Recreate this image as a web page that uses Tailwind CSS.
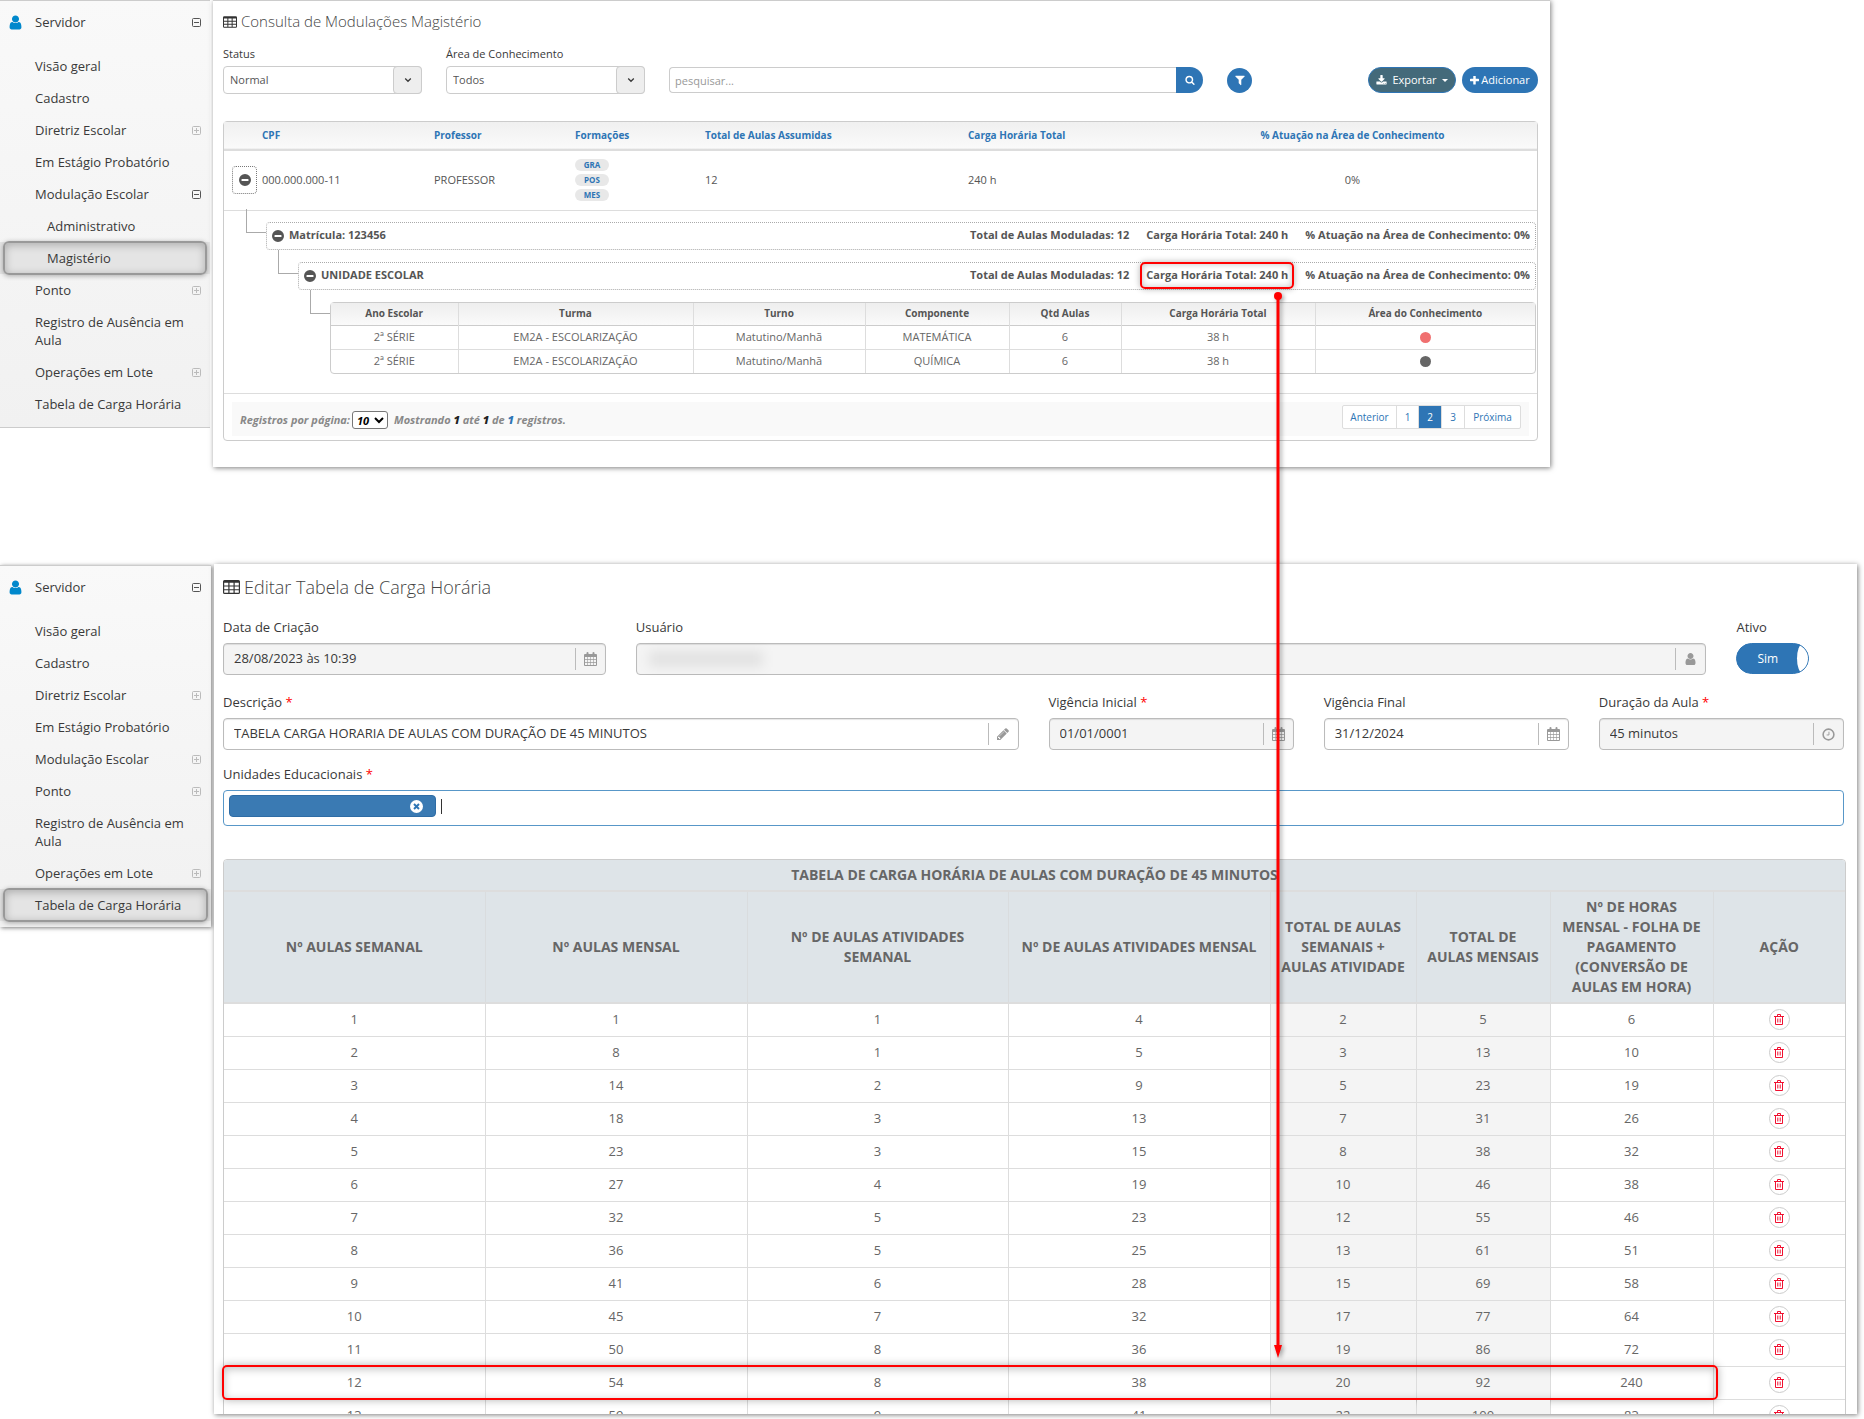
<!DOCTYPE html>
<html lang="pt-BR">
<head>
  <meta charset="UTF-8" />
  <meta name="viewport" content="width=device-width, initial-scale=1.0" />
  <title>Tabela de Carga Horária</title>
  <script src="https://cdn.jsdelivr.net/npm/@tailwindcss/browser@4"></script>
</head>
<body class="bg-white font-['Open_Sans',sans-serif] text-[13px] text-[#393939] overflow-x-hidden">

  <!-- icons -->
  <svg class="hidden">
    <symbol id="i-user" viewBox="192 128 1408 1536"><path d="M1536 1399q0 109-62.5 187t-150.5 78h-854q-88 0-150.5-78t-62.5-187q0-85 8.5-160.5t31.5-152 58.5-131 94-89 134.5-34.5q131 128 313 128t313-128q76 0 134.5 34.5t94 89 58.5 131 31.5 152 8.5 160.5zm-256-887q0 159-112.5 271.5t-271.5 112.5-271.5-112.5-112.5-271.5 112.5-271.5 271.5-112.5 271.5 112.5 112.5 271.5z"/></symbol>
    <symbol id="i-table" viewBox="0 0 17 14"><path fill-rule="evenodd" d="M1.5 0h14A1.5 1.5 0 0 1 17 1.500v11a1.500 1.500 0 0 1-1.500 1.500h-14A1.500 1.500 0 0 1 0 12.500v-11A1.500 1.500 0 0 1 1.500 0zM1.200 2.800v2.700h4.100V2.800zM6.500 2.800v2.700h4V2.800zM11.700 2.800v2.700h4.100V2.800zM1.200 6.600v2.600h4.100V6.600zM6.500 6.600v2.600h4V6.600zM11.700 6.600v2.600h4.100V6.600zM1.200 10.300v2.500h4.100v-2.500zM6.500 10.300v2.500h4v-2.500zM11.700 10.300v2.500h4.100v-2.500z"/></symbol>
    <symbol id="i-calendar" viewBox="0 0 13 14"><path fill-rule="evenodd" d="M1 2h1.500V1a1 1 0 0 1 2 0v1h4V1a1 1 0 0 1 2 0v1H12a1 1 0 0 1 1 1v10a1 1 0 0 1-1 1H1a1 1 0 0 1-1-1V3a1 1 0 0 1 1-1zM1 5v2.200h2.200V5zM3.800 5v2.200h2.400V5zM6.800 5v2.200h2.400V5zM9.800 5v2.200H12V5zM1 7.900v2.200h2.200V7.900zM3.800 7.900v2.200h2.400V7.900zM6.800 7.900v2.200h2.400V7.900zM9.800 7.900v2.200H12V7.900zM1 10.800V13h2.200v-2.200zM3.800 10.800V13h2.400v-2.200zM6.800 10.800V13h2.400v-2.200zM9.800 10.800V13H12v-2.200z"/></symbol>
    <symbol id="i-pencil" viewBox="0 0 1792 1792"><path d="M491 1536l91-91-235-235-91 91v107h128v128h107zm523-928q0-22-22-22-10 0-17 7l-542 542q-7 7-7 17 0 22 22 22 10 0 17-7l542-542q7-7 7-17zm-54-192l416 416-832 832h-416v-416zm683 96q0 53-37 90l-166 166-416-416 166-165q36-38 90-38 53 0 91 38l235 234q37 39 37 91z"/></symbol>
    <symbol id="i-clock" viewBox="0 0 14 14"><path fill="none" stroke="currentColor" stroke-width="1.700" d="M7 1.200a5.800 5.800 0 1 1 0 11.600A5.800 5.800 0 0 1 7 1.200z"/><path fill="none" stroke="currentColor" d="M7.500 4v3.500H5"/></symbol>
    <symbol id="i-search" viewBox="0 0 1792 1792"><path d="M1216 832q0-185-131.500-316.500t-316.500-131.500-316.500 131.500-131.500 316.500 131.500 316.500 316.500 131.500 316.500-131.500 131.500-316.500zm512 832q0 52-38 90t-90 38q-54 0-90-38l-343-342q-179 124-399 124-143 0-273.500-55.500t-225-150-150-225-55.500-273.500 55.500-273.500 150-225 225-150 273.500-55.500 273.500 55.500 225 150 150 225 55.500 273.500q0 220-124 399l343 343q37 37 37 90z"/></symbol>
    <symbol id="i-filter" viewBox="0 0 1792 1792"><path d="M1595 295q17 41-14 70l-493 493v742q0 42-39 59-13 5-25 5-27 0-45-19l-256-256q-19-19-19-45v-486l-493-493q-31-29-14-70 17-39 59-39h1280q42 0 59 39z"/></symbol>
    <symbol id="i-plus" viewBox="192 192 1408 1408"><path d="M1600 736v192q0 40-28 68t-68 28h-416v416q0 40-28 68t-68 28h-192q-40 0-68-28t-28-68v-416h-416q-40 0-68-28t-28-68v-192q0-40 28-68t68-28h416v-416q0-40 28-68t68-28h192q40 0 68 28t28 68v416h416q40 0 68 28t28 68z"/></symbol>
    <symbol id="i-download" viewBox="0 0 1792 1600"><path d="M1344 1344q0-26-19-45t-45-19-45 19-19 45 19 45 45 19 45-19 19-45zm256 0q0-26-19-45t-45-19-45 19-19 45 19 45 45 19 45-19 19-45zm128-224v320q0 40-28 68t-68 28h-1472q-40 0-68-28t-28-68v-320q0-40 28-68t68-28h465l135 136q58 56 136 56t136-56l136-136h464q40 0 68 28t28 68zm-325-569q17 41-14 70l-448 448q-18 19-45 19t-45-19l-448-448q-31-29-14-70 17-39 59-39h256v-448q0-26 19-45t45-19h256q26 0 45 19t19 45v448h256q42 0 59 39z"/></symbol>
    <symbol id="i-minus" viewBox="0 0 12 12"><path fill-rule="evenodd" d="M6 0a6 6 0 1 1 0 12A6 6 0 0 1 6 0zM3 5a.5.5 0 0 0-.5.5v1A.5.5 0 0 0 3 7h6a.5.5 0 0 0 .5-.5v-1A.5.5 0 0 0 9 5z"/></symbol>
    <symbol id="i-times" viewBox="0 0 12 12"><circle cx="6" cy="6" r="6" fill="#fff"/><path stroke="#2e75b5" stroke-width="1.800" d="M3.700 3.700l4.600 4.600M8.300 3.700L3.700 8.300"/></symbol>
    <symbol id="i-trash" viewBox="0 0 10 11"><path fill="none" stroke="currentColor" d="M0 2.500h10M3.500 2V.5h3V2M1.500 2.500v8h7v-8M3.800 4.500v4M6.200 4.500v4"/></symbol>
    <symbol id="i-down" viewBox="0 0 8 8"><path fill="none" stroke="currentColor" stroke-width="1.300" d="M1.200 2.500L4 5.300l2.800-2.800"/></symbol>
    <symbol id="i-open" viewBox="0 0 9 9"><path fill="none" stroke="currentColor" d="M1.500.5h6a1 1 0 0 1 1 1v6a1 1 0 0 1-1 1h-6a1 1 0 0 1-1-1v-6a1 1 0 0 1 1-1zM2 4.500h5"/></symbol>
    <symbol id="i-closed" viewBox="0 0 9 9"><path fill="none" stroke="currentColor" d="M1.500.5h6a1 1 0 0 1 1 1v6a1 1 0 0 1-1 1h-6a1 1 0 0 1-1-1v-6a1 1 0 0 1 1-1zM2 4.500h5M4.500 2v5"/></symbol>
  </svg>

  <!-- Consulta -->
  <div class="flex items-start pr-[314px]">
    <nav id="menuConsulta" class="w-[210px] shrink-0 h-[428px] pt-[6px] bg-linear-to-b from-[#f9f9f9] to-[#f1f1f1] border-t border-b border-[#ccc]"></nav>

    <main class="flex-1 min-w-0 h-[467px] ml-[3px] pl-[10px] pr-[12px] bg-white border-t border-[#ccc] shadow-[1px_1px_5px_rgba(0,0,0,0.5)] text-[11px]">
      <h1 class="flex items-center gap-1 pt-[8px] h-[33px] text-[15px] font-light text-[#444]">
        <svg class="w-[14px] h-[12px] fill-[#333]"><use href="#i-table" /></svg>Consulta de Modulações Magistério
      </h1>

      <div class="flex items-end pt-3">
        <div class="w-[199px]">
          <label for="status" class="block leading-4 mb-1">Status</label>
          <div class="relative">
            <select id="status" class="appearance-none w-full h-7 pl-[6px] border border-[#ccc] rounded-[4px] bg-white text-[11px] text-[#555]"><option>Normal</option></select>
            <span class="absolute right-0 top-0 w-[29px] h-7 border border-[#ccc] rounded-[4px] bg-[#eee] grid place-items-center pointer-events-none"><svg class="w-2 h-2"><use href="#i-down" /></svg></span>
          </div>
        </div>
        <div class="w-[199px] ml-6">
          <label for="area" class="block leading-4 mb-1">Área de Conhecimento</label>
          <div class="relative">
            <select id="area" class="appearance-none w-full h-7 pl-[6px] border border-[#ccc] rounded-[4px] bg-white text-[11px] text-[#555]"><option>Todos</option></select>
            <span class="absolute right-0 top-0 w-[29px] h-7 border border-[#ccc] rounded-[4px] bg-[#eee] grid place-items-center pointer-events-none"><svg class="w-2 h-2"><use href="#i-down" /></svg></span>
          </div>
        </div>
        <div class="flex flex-1 items-center ml-6 mb-px">
          <input type="text" aria-label="pesquisar" placeholder="pesquisar..." class="flex-1 min-w-0 h-[26px] px-[5px] border border-[#ccc] border-r-0 rounded-l-[4px] placeholder:text-[#999]" />
          <button aria-label="Pesquisar" class="w-[27px] h-[26px] rounded-r-full bg-[#2e75b5] grid place-items-center"><svg class="w-[10px] h-[10px] fill-white"><use href="#i-search" /></svg></button>
          <button aria-label="Filtrar" class="w-[25px] h-[25px] ml-6 rounded-full bg-[#2e75b5] grid place-items-center"><svg class="w-[12px] h-[12px] fill-white"><use href="#i-filter" /></svg></button>
          <button class="flex items-center justify-center gap-[5px] w-[88px] h-[26px] ml-[116px] rounded-full bg-[#446a7a] border border-[#2e75b5] text-white"><svg class="w-[11px] h-[10px] fill-white"><use href="#i-download" /></svg>Exportar<span class="border-x-[3px] border-x-transparent border-t-[3px] border-t-white"></span></button>
          <button class="flex items-center justify-center gap-[2px] w-[76px] h-[26px] ml-[6px] rounded-full bg-[#2e75b5] text-white"><svg class="w-[9px] h-[9px] fill-white"><use href="#i-plus" /></svg>Adicionar</button>
        </div>
      </div>

      <section class="mt-[27px] h-[320px] border border-[#ccc] rounded-[4px]">
        <table class="w-full table-fixed text-left">
          <colgroup><col class="w-[38px]" /><col class="w-[172px]" /><col class="w-[141px]" /><col class="w-[130px]" /><col class="w-[263px]" /><col class="w-[200px]" /><col /></colgroup>
          <thead>
            <tr class="h-[28px] bg-linear-to-b from-[#f0f0f0] to-[#fafafa] border-b-2 border-[#ddd] text-[10px] text-[#2e75b5]">
              <th></th><th>CPF</th><th>Professor</th><th>Formações</th><th>Total de Aulas Assumidas</th><th>Carga Horária Total</th><th class="text-center">% Atuação na Área de Conhecimento</th>
            </tr>
          </thead>
          <tbody>
            <tr class="h-[60px] border-b border-[#ddd] text-[#555]">
              <td><button aria-label="Recolher" class="ml-2 w-[25px] h-[28px] border border-dotted border-[#777] rounded-[4px] grid place-items-center"><svg class="w-3 h-3 fill-[#555]"><use href="#i-minus" /></svg></button></td>
              <td>000.000.000-11</td>
              <td>PROFESSOR</td>
              <td>
                <div class="flex flex-col items-start gap-[3px] text-[8px] font-bold text-[#2e75b5] leading-3 text-center">
                  <span class="w-[34px] rounded-full bg-[#e8e8e8]">GRA</span>
                  <span class="w-[34px] rounded-full bg-[#e8e8e8]">POS</span>
                  <span class="w-[34px] rounded-full bg-[#e8e8e8]">MES</span>
                </div>
              </td>
              <td>12</td>
              <td>240 h</td>
              <td class="text-center">0%</td>
            </tr>
          </tbody>
        </table>

        <div class="pt-[11px] pb-[19px] pr-px text-[#555]">
          <div class="relative flex items-center h-7 ml-[42px] px-[5px] border border-dotted border-[#aaa] rounded-[4px] font-bold">
            <span class="absolute -left-[21px] -top-[14px] w-5 h-6 border-l border-b border-[#aaa]"></span>
            <svg class="w-3 h-3 mr-[5px] fill-[#555]"><use href="#i-minus" /></svg>Matrícula: 123456
            <span class="ml-auto">Total de Aulas Moduladas: 12</span>
            <span class="ml-[17px]">Carga Horária Total: 240 h</span>
            <span class="ml-[17px]">% Atuação na Área de Conhecimento: 0%</span>
          </div>
          <div class="relative flex items-center h-7 mt-3 ml-[74px] px-[5px] border border-dotted border-[#aaa] rounded-[4px] font-bold">
            <span class="absolute -left-[21px] -top-[13px] w-5 h-6 border-l border-b border-[#aaa]"></span>
            <svg class="w-3 h-3 mr-[5px] fill-[#555]"><use href="#i-minus" /></svg>UNIDADE ESCOLAR
            <span class="ml-auto">Total de Aulas Moduladas: 12</span>
            <span class="relative ml-[17px]">Carga Horária Total: 240 h
              <!-- destaque e seta -->
              <span class="absolute -inset-x-[6px] -inset-y-[5px] border-2 border-[#f00] rounded-[5px] shadow-[0_0_6px_rgba(0,0,0,0.3),inset_0_0_6px_rgba(0,0,0,0.25)]"></span>
              <svg class="absolute z-10 right-0 top-[21px] w-5 h-[1072px] fill-[#f00] drop-shadow-[2px_2px_2px_rgba(0,0,0,0.35)]" viewBox="0 0 20 1072"><circle cx="10" cy="8" r="4" /><path d="M8.500 8h3v1049h2.500L10 1070 6 1057h2.500z" /></svg>
            </span>
            <span class="ml-[17px]">% Atuação na Área de Conhecimento: 0%</span>
          </div>
          <div class="relative mt-3 ml-[106px] border border-[#ccc] rounded-[4px]">
            <span class="absolute -left-[21px] -top-[13px] w-5 h-6 border-l border-b border-[#aaa]"></span>
            <table class="w-full table-fixed text-center">
              <colgroup><col class="w-[127px]" /><col class="w-[235px]" /><col class="w-[172px]" /><col class="w-[144px]" /><col class="w-[112px]" /><col class="w-[194px]" /><col /></colgroup>
              <thead>
                <tr class="h-[23px] bg-linear-to-b from-[#eee] to-[#fafafa] border-b border-[#ccc] divide-x divide-[#ddd] text-[10px]">
                  <th>Ano Escolar</th><th>Turma</th><th>Turno</th><th>Componente</th><th>Qtd Aulas</th><th>Carga Horária Total</th><th>Área do Conhecimento</th>
                </tr>
              </thead>
              <tbody class="text-[#666]">
                <tr class="h-[24px] border-b border-[#ddd] divide-x divide-[#ddd]">
                  <td>2ª SÉRIE</td><td>EM2A - ESCOLARIZAÇÃO</td><td>Matutino/Manhã</td><td>MATEMÁTICA</td><td>6</td><td>38 h</td><td><span class="block mx-auto w-[11px] h-[11px] rounded-full bg-[#f07070]"></span></td>
                </tr>
                <tr class="h-[23px] divide-x divide-[#ddd]">
                  <td>2ª SÉRIE</td><td>EM2A - ESCOLARIZAÇÃO</td><td>Matutino/Manhã</td><td>QUÍMICA</td><td>6</td><td>38 h</td><td><span class="block mx-auto w-[11px] h-[11px] rounded-full bg-[#666]"></span></td>
                </tr>
              </tbody>
            </table>
          </div>
        </div>

        <div class="border-t border-[#ddd] px-2 pt-2">
          <div class="flex items-center h-[34px] px-2 pt-[3px] bg-[#f9f9f9]">
            <label for="porPagina" class="font-bold italic text-[#888]">Registros por página:</label>
            <select id="porPagina" class="w-9 h-[18px] ml-[2px] border border-[#777] rounded-[3px] bg-white font-bold italic text-black"><option>10</option></select>
            <span class="ml-[6px] font-bold italic text-[#888]">Mostrando <b class="text-[#222]">1</b> até <b class="text-[#222]">1</b> de <b class="text-[#2e75b5]">1</b> registros.</span>
            <div class="flex ml-auto h-6 mb-[6px] border border-[#ddd] divide-x divide-[#ddd] rounded-[2px] bg-white text-[10px] text-[#2e75b5] leading-[22px] text-center">
              <a href="#" class="w-[54px]">Anterior</a><a href="#" class="w-[22px]">1</a><a href="#" class="w-[23px] bg-[#2e75b5] text-white">2</a><a href="#" class="w-[23px]">3</a><a href="#" class="w-[55px]">Próxima</a>
            </div>
          </div>
        </div>
      </section>
    </main>
  </div>

  <!-- Edição -->
  <div class="flex items-start mt-[97px] pr-[7px] pb-[5px]">
    <nav id="menuEdicao" class="w-[211px] shrink-0 h-[362px] mt-px pt-[6px] bg-linear-to-b from-[#f9f9f9] to-[#f1f1f1] border-t border-[#ccc] shadow-[1px_1px_4px_rgba(0,0,0,0.5)]"></nav>

    <main class="flex-1 min-w-0 h-[850px] ml-[3px] pl-[9px] pr-[11px] bg-white shadow-[1px_1px_5px_rgba(0,0,0,0.5)] overflow-hidden">
      <h1 class="flex items-center gap-1 h-[46px] text-[18px] font-light text-[#444]">
        <svg class="w-[17px] h-[14px] fill-[#333]"><use href="#i-table" /></svg>Editar Tabela de Carga Horária
      </h1>

      <form class="grid grid-cols-12 gap-x-[30px] pr-[2px]">
        <div class="col-span-3 h-[74px]">
          <label for="criacao" class="block h-[33px] pt-[7px] leading-5">Data de Criação</label>
          <div class="flex items-center h-8 border border-[#bbb] rounded-[4px] bg-[#f4f4f4] shadow-[inset_0_1px_1px_rgba(0,0,0,0.1)]">
            <input id="criacao" value="28/08/2023 às 10:39" readonly class="flex-1 min-w-0 px-[10px] outline-none" />
            <span class="w-[30px] h-[22px] border-l border-[#bbb] grid place-items-center"><svg class="w-[13px] h-[14px] fill-[#999]"><use href="#i-calendar" /></svg></span>
          </div>
        </div>
        <div class="col-span-8">
          <label for="usuario" class="block h-[33px] pt-[7px] leading-5">Usuário</label>
          <div class="relative flex items-center h-8 border border-[#bbb] rounded-[4px] bg-[#f4f4f4] shadow-[inset_0_1px_1px_rgba(0,0,0,0.1)]">
            <input id="usuario" readonly class="flex-1 min-w-0 px-[10px] outline-none" />
            <span class="absolute left-3 top-[7px] w-[114px] h-4 bg-black/7 blur-[6px]"></span>
            <span class="w-[30px] h-[22px] border-l border-[#bbb] grid place-items-center"><svg class="w-[11px] h-[12px] fill-[#999]"><use href="#i-user" /></svg></span>
          </div>
        </div>
        <div>
          <label for="ativo" class="block h-[33px] pt-[7px] leading-5">Ativo</label>
          <label class="relative flex items-center w-[73px] h-[31px] pl-5 rounded-full border border-[#2e75b5] bg-[#2e75b5] text-white text-[12px] overflow-hidden">
            <input id="ativo" type="checkbox" checked class="sr-only" />Sim
            <span class="absolute right-0 inset-y-0 w-[11px] rounded-l-[50%] bg-white"></span>
          </label>
        </div>

        <div class="col-span-6 h-[73px]">
          <label for="descricao" class="block h-[34px] pt-2 leading-5">Descrição <span class="text-[#f00]">*</span></label>
          <div class="flex items-center h-8 border border-[#bbb] rounded-[4px] shadow-[inset_0_1px_1px_rgba(0,0,0,0.1)]">
            <input id="descricao" value="TABELA CARGA HORARIA DE AULAS COM DURAÇÃO DE 45 MINUTOS" class="flex-1 min-w-0 px-[10px] outline-none" />
            <span class="w-[30px] h-[22px] border-l border-[#bbb] grid place-items-center"><svg class="w-[14px] h-[14px] fill-[#999]"><use href="#i-pencil" /></svg></span>
          </div>
        </div>
        <div class="col-span-2">
          <label for="inicial" class="block h-[34px] pt-2 leading-5">Vigência Inicial <span class="text-[#f00]">*</span></label>
          <div class="flex items-center h-8 border border-[#bbb] rounded-[4px] bg-[#f4f4f4] shadow-[inset_0_1px_1px_rgba(0,0,0,0.1)]">
            <input id="inicial" value="01/01/0001" readonly class="flex-1 min-w-0 px-[10px] outline-none" />
            <span class="w-[30px] h-[22px] border-l border-[#bbb] grid place-items-center"><svg class="w-[13px] h-[14px] fill-[#999]"><use href="#i-calendar" /></svg></span>
          </div>
        </div>
        <div class="col-span-2">
          <label for="final" class="block h-[34px] pt-2 leading-5">Vigência Final</label>
          <div class="flex items-center h-8 border border-[#bbb] rounded-[4px] shadow-[inset_0_1px_1px_rgba(0,0,0,0.1)]">
            <input id="final" value="31/12/2024" class="flex-1 min-w-0 px-[10px] outline-none" />
            <span class="w-[30px] h-[22px] border-l border-[#bbb] grid place-items-center"><svg class="w-[13px] h-[14px] fill-[#999]"><use href="#i-calendar" /></svg></span>
          </div>
        </div>
        <div class="col-span-2">
          <label for="duracao" class="block h-[34px] pt-2 leading-5">Duração da Aula <span class="text-[#f00]">*</span></label>
          <div class="flex items-center h-8 border border-[#bbb] rounded-[4px] bg-[#f4f4f4] shadow-[inset_0_1px_1px_rgba(0,0,0,0.1)]">
            <input id="duracao" value="45 minutos" readonly class="flex-1 min-w-0 px-[10px] outline-none" />
            <span class="w-[30px] h-[22px] border-l border-[#bbb] grid place-items-center"><svg class="w-[13px] h-[13px] text-[#999]"><use href="#i-clock" /></svg></span>
          </div>
        </div>

        <div class="col-span-12">
          <label for="unidades" class="block h-[33px] pt-[7px] leading-5">Unidades Educacionais <span class="text-[#f00]">*</span></label>
          <div class="flex items-start h-9 pl-[5px] pt-1 border border-[#5897c8] rounded-[4px]">
            <span class="flex items-center justify-end w-[207px] h-[22px] pr-[12px] rounded-[4px] bg-[#3a7ab3] border border-[#2e6ca5]"><svg class="w-[13px] h-[13px]"><use href="#i-times" /></svg></span>
            <span class="w-px h-[15px] mt-1 ml-[5px] bg-[#333]"></span>
            <input id="unidades" class="flex-1 min-w-0 outline-none" />
          </div>
        </div>
      </form>

      <div class="mt-[33px] border border-[#ccc] rounded-t-[4px]">
        <table class="w-full table-fixed text-center text-[#666]">
          <colgroup><col class="w-[261px]" /><col class="w-[262px]" /><col class="w-[261px]" /><col class="w-[262px]" /><col class="w-[146px]" /><col class="w-[134px]" /><col class="w-[163px]" /><col /></colgroup>
          <thead class="text-[14px] leading-5 [&_th]:bg-[#dee4e8]">
            <tr class="h-[31px] border-b-2 border-[#ddd]"><th colspan="8" class="rounded-t-[3px]">TABELA DE CARGA HORÁRIA DE AULAS COM DURAÇÃO DE 45 MINUTOS</th></tr>
            <tr class="h-[112px] border-b-2 border-[#ddd] divide-x divide-[#d9dcde]">
              <th>Nº AULAS SEMANAL</th>
              <th>Nº AULAS MENSAL</th>
              <th>Nº DE AULAS ATIVIDADES<br />SEMANAL</th>
              <th>Nº DE AULAS ATIVIDADES MENSAL</th>
              <th class="whitespace-nowrap">TOTAL DE AULAS<br />SEMANAIS +<br />AULAS ATIVIDADE</th>
              <th>TOTAL DE<br />AULAS MENSAIS</th>
              <th>Nº DE HORAS<br />MENSAL - FOLHA DE<br />PAGAMENTO<br />(CONVERSÃO DE<br />AULAS EM HORA)</th>
              <th>AÇÃO</th>
            </tr>
          </thead>
          <tbody id="cargas"></tbody>
        </table>
      </div>
    </main>
  </div>

  <script>
    // [texto, estado do submenu, nível]
    const itens = [
      ['Visão geral'], ['Cadastro'], ['Diretriz Escolar', 'closed'], ['Em Estágio Probatório'],
      ['Modulação Escolar', 'closed'], ['Administrativo', '', 2], ['Magistério', '', 2],
      ['Ponto', 'closed'], ['Registro de Ausência em Aula'], ['Operações em Lote', 'closed'], ['Tabela de Carga Horária']
    ];

    function montarMenu(id, ativo, aberto) {
      let html = `
        <a href="#" class="relative flex items-center h-8 mb-[11px] pl-[35px]">
          <svg class="absolute left-[9px] top-2 w-[13px] h-[15px] fill-[#0088cc]"><use href="#i-user" /></svg>Servidor
          <svg class="absolute left-[192px] top-[11px] w-[9px] h-[9px] text-[#555]"><use href="#i-open" /></svg>
        </a>`;
      itens.forEach(([texto, estado, nivel]) => {
        if (nivel && !aberto) return;
        const expandido = aberto && texto === 'Modulação Escolar';
        html += `
          <a href="#" class="relative block py-[7px] leading-[18px] pr-[20px] ${nivel ? 'pl-[47px]' : 'pl-[35px]'} ${texto === ativo ? 'bg-[#e4e4e4]' : ''}">
            ${texto === ativo ? '<span class="absolute left-[3px] right-[3px] -top-px -bottom-px border-2 border-[#999] rounded-[6px] shadow-[0_1px_5px_rgba(0,0,0,0.3),inset_0_2px_8px_rgba(0,0,0,0.25)]"></span>' : ''}
            ${texto}
            ${estado ? `<svg class="absolute left-[192px] top-3 w-[9px] h-[9px] ${expandido ? 'text-[#555]' : 'text-[#bbb]'}"><use href="#i-${expandido ? 'open' : 'closed'}" /></svg>` : ''}
          </a>`;
      });
      document.getElementById(id).innerHTML = html;
    }

    montarMenu('menuConsulta', 'Magistério', true);
    montarMenu('menuEdicao', 'Tabela de Carga Horária', false);

    const cargas = [
      [1, 1, 1, 4, 2, 5, 6],
      [2, 8, 1, 5, 3, 13, 10],
      [3, 14, 2, 9, 5, 23, 19],
      [4, 18, 3, 13, 7, 31, 26],
      [5, 23, 3, 15, 8, 38, 32],
      [6, 27, 4, 19, 10, 46, 38],
      [7, 32, 5, 23, 12, 55, 46],
      [8, 36, 5, 25, 13, 61, 51],
      [9, 41, 6, 28, 15, 69, 58],
      [10, 45, 7, 32, 17, 77, 64],
      [11, 50, 8, 36, 19, 86, 72],
      [12, 54, 8, 38, 20, 92, 240],
      [13, 59, 9, 41, 22, 100, 83]
    ];

    document.getElementById('cargas').innerHTML = cargas.map(linha => `
      <tr class="relative h-[33px] border-b border-[#ddd] divide-x divide-[#ddd]">
        ${linha.map((valor, i) => `<td class="${i === 4 || i === 5 ? 'bg-[#f4f4f4]' : ''}">${valor}</td>`).join('')}
        <td>
          <button aria-label="Excluir" class="grid place-items-center mx-auto w-[21px] h-[21px] rounded-full border border-[#ccc] text-[#f01030]"><svg class="w-[10px] h-[11px]"><use href="#i-trash" /></svg></button>
          ${linha[0] === 12 ? '<span class="absolute -left-[2px] right-[127px] -top-px -bottom-[2px] border-2 border-[#f00] rounded-[5px] shadow-[0_0_8px_rgba(0,0,0,0.3),inset_0_2px_8px_rgba(0,0,0,0.25)]"></span>' : ''}
        </td>
      </tr>`).join('');
  </script>
</body>
</html>
